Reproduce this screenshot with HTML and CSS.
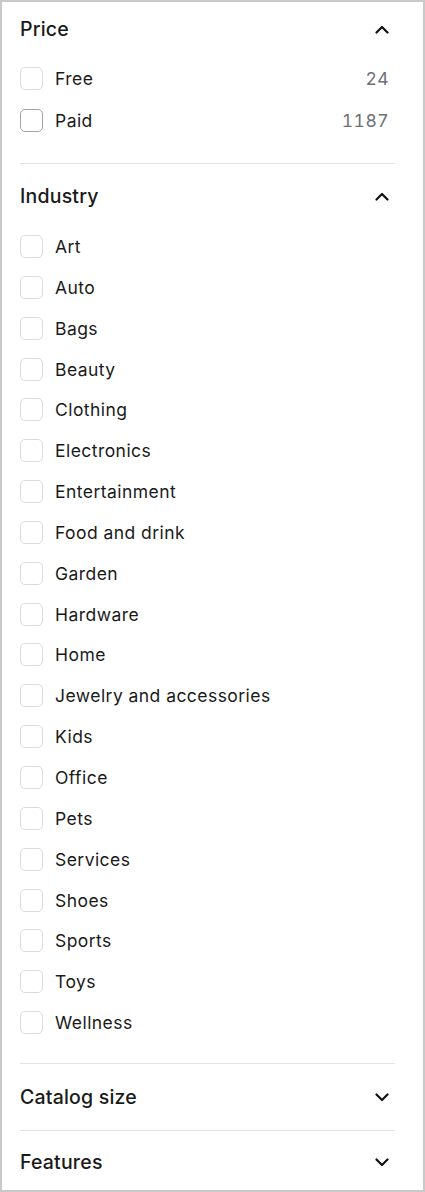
FILE: index.html
```html
<!DOCTYPE html>
<html lang="en">
<head>
  <meta charset="UTF-8">
  <title>Filters</title>
  <link rel="stylesheet" href="styles.css">
</head>
<body>

  <div class="panel">

    <div class="section section-first">
      <div class="section-head">
        <span class="section-title">Price</span>
        <svg class="chevron" viewBox="0 0 14 9"><path d="M1.5 7.5L7 2l5.5 5.5"/></svg>
      </div>
      <div class="options options-price">
        <label class="option"><span class="box"></span><span class="name">Free</span><span class="count">24</span></label>
        <label class="option"><span class="box box-hover"></span><span class="name">Paid</span><span class="count">1187</span></label>
      </div>
    </div>

    <div class="section">
      <div class="section-head">
        <span class="section-title">Industry</span>
        <svg class="chevron" viewBox="0 0 14 9"><path d="M1.5 7.5L7 2l5.5 5.5"/></svg>
      </div>
      <div class="options" id="industryList"></div>
    </div>

    <div class="section section-closed">
      <div class="section-head">
        <span class="section-title">Catalog size</span>
        <svg class="chevron" viewBox="0 0 14 9"><path d="M1.5 1.5L7 7l5.5-5.5"/></svg>
      </div>
    </div>

    <div class="section section-closed section-last">
      <div class="section-head">
        <span class="section-title">Features</span>
        <svg class="chevron" viewBox="0 0 14 9"><path d="M1.5 1.5L7 7l5.5-5.5"/></svg>
      </div>
    </div>

  </div>

  <script>
    const industries = ["Art", "Auto", "Bags", "Beauty", "Clothing", "Electronics",
      "Entertainment", "Food and drink", "Garden", "Hardware", "Home",
      "Jewelry and accessories", "Kids", "Office", "Pets", "Services",
      "Shoes", "Sports", "Toys", "Wellness"];

    const list = document.getElementById('industryList');
    industries.forEach(name => {
      const row = document.createElement('label');
      row.className = 'option';
      row.innerHTML = `<span class="box"></span><span class="name">${name}</span>`;
      list.appendChild(row);
    });
  </script>
</body>
</html>
```

FILE: styles.css
```css
* {
  margin: 0;
  padding: 0;
  box-sizing: border-box;
}

body {
  width: 425px;
  height: 1192px;
  overflow: hidden;
  background: #fff;
  font-family: 'Inter', 'Noto Sans', sans-serif;
  color: #1a1a1a;
}

.panel {
  height: 1192px;
  border: 2px solid #c9c9c9;
  padding: 0 28px 0 18px;
  overflow: hidden;
}

.section {
  border-bottom: 1px solid #e3e3e3;
  padding-bottom: 29px;
}

.section-head {
  height: 64px;
  display: flex;
  align-items: center;
  justify-content: space-between;
}

.section-first {
  padding-bottom: 31px;
}

.section-first .section-head {
  height: 54px;
}

.section-closed {
  padding-bottom: 0;
}

.section-closed .section-head {
  height: 66px;
}

.section-last {
  border-bottom: none;
}

.section-last .section-head {
  height: 62px;
}

.section-title {
  font-size: 19.5px;
  font-weight: 450;
  letter-spacing: 0.2px;
}

.chevron {
  width: 14px;
  height: 9px;
  margin-right: 6px;
  fill: none;
  stroke: #111;
  stroke-width: 2.2;
  stroke-linecap: round;
  stroke-linejoin: round;
}

.options {
  display: flex;
  flex-direction: column;
  gap: 17.85px;
  margin-top: 7px;
}

.options-price {
  gap: 19px;
  margin-top: 11px;
}

.option {
  display: flex;
  align-items: center;
  height: 23px;
  font-size: 17.5px;
  letter-spacing: 0.45px;
}

.box {
  width: 23px;
  height: 23px;
  border: 1px solid #dcdcdc;
  border-radius: 5px;
  margin-right: 12px;
  flex-shrink: 0;
}

.box-hover {
  border-color: #a3a3a3;
}

.name {
  flex: 1;
}

.count {
  color: #6d7175;
  margin-right: 6px;
  font-variant-numeric: tabular-nums;
}
```
